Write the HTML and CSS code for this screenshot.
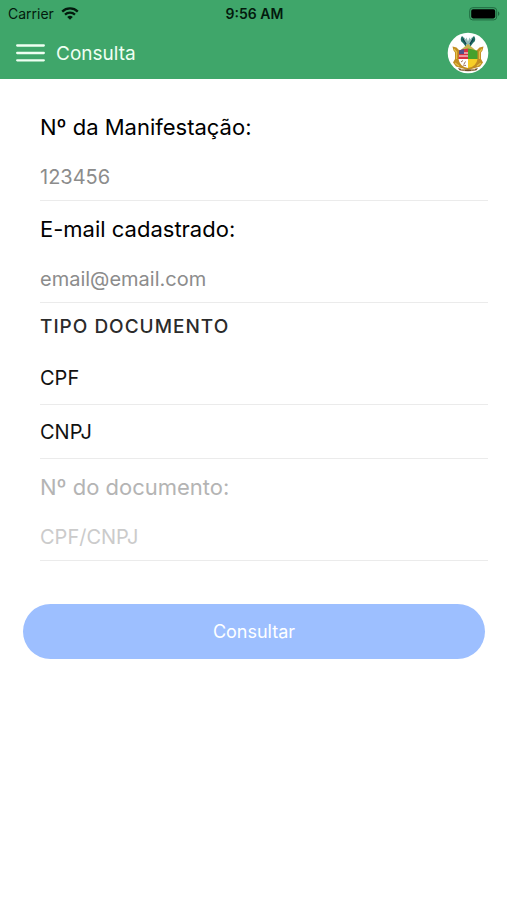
FILE: index.html
```html
<!DOCTYPE html>
<html lang="pt-BR">
<head>
  <meta charset="UTF-8">
  <title>Consulta</title>
  <meta name="viewport" content="width=device-width, initial-scale=1">
  <link rel="stylesheet" href="styles.css">
</head>
<body>

  <header class="header">
    <div class="status-bar">
      <div class="carrier">
        <span>Carrier</span>
        <svg class="wifi" viewBox="0 0 18 13" width="18" height="13" aria-hidden="true">
          <path d="M1.2 4.6a11.2 11.2 0 0 1 15.6 0" fill="none" stroke="#031a0d" stroke-width="2.3"/>
          <path d="M4 7.6a7.2 7.2 0 0 1 10 0" fill="none" stroke="#031a0d" stroke-width="2.2"/>
          <path d="M9 12.8L6.2 10a4 4 0 0 1 5.6 0z" fill="#031a0d"/>
        </svg>
      </div>
      <span class="time">9:56 AM</span>
      <svg class="battery" viewBox="0 0 32 14" width="32" height="14" aria-hidden="true">
        <rect x="0.7" y="0.7" width="27" height="12.2" rx="3" fill="none" stroke="#1f6a40" stroke-width="1"/>
        <rect x="2.2" y="2.2" width="24" height="9.2" rx="1.8" fill="#000"/>
        <path d="M29 4.6c1.8.6 1.8 3.8 0 4.4z" fill="#1f6a40"/>
      </svg>
    </div>

    <div class="toolbar">
      <button type="button" class="menu-btn" aria-label="Menu">
        <svg viewBox="0 0 29 20" width="29" height="20" aria-hidden="true">
          <path d="M1.2 2.5h26.6M1.2 10h26.6M1.2 17.3h26.6" stroke="#effff2" stroke-width="2.3" stroke-linecap="round"/>
        </svg>
      </button>
      <h1 class="title">Consulta</h1>
      <!-- coat of arms -->
      <svg class="crest" viewBox="0 0 42 42" width="42" height="42" role="img" aria-label="Brasão">
        <circle cx="21" cy="21" r="20.3" fill="#fff"/>
        <path d="M15 4c-2 2.500-1.500 5.500 1 7l3 4 1-4-2-4zM27 4c2 2.500 1.500 5.500-1 7L23 15l-1-4 2-4z" fill="#1e6d63"/>
        <path d="M16.500 4.500l2 3 1-2 1.500 4 1.500-4 1 2 2-3-1 6-3.500 4-3.500-4z" fill="#8fb9b4"/>
        <path d="M16 7l3 5M26 7l-3 5" stroke="#113f4b" stroke-width="1.400"/>
        <path d="M13 18.500L21 12l8 6.500z" fill="#c6b44c"/>
        <path d="M5.500 14.500l4 1 3 3h17l3-3 4-1-1 4-1.500 2v6.500l2 3.500-3 4-5 1.500-7 2-7-2-5-1.500-3-4 2-3.500V20.500l-1.500-2z" fill="#c28d22"/>
        <path d="M7 17l2.500 3v7M35 17l-2.500 3v7M8 31l4 3M34 31l-4 3" fill="none" stroke="#e2c249" stroke-width="1.200"/>
        <path d="M12 18.500q4-1.500 9-2V27H11.500z" fill="#d93142"/>
        <path d="M12 21h9M12 24h9" stroke="#fff" stroke-width="1"/>
        <path d="M12 18.500q2-1 5-1.500v5h-5z" fill="#54528b"/>
        <path d="M21 16.500q5 .5 9.500 2.500v8H21z" fill="#47a12c"/>
        <path d="M11.500 27H21v9q-8.500-1.500-9.500-9z" fill="#fff"/>
        <path d="M21 27h9.500q-1 7.500-9.500 9z" fill="#f6ce27"/>
        <path d="M14 30l2-1.500M17 32l1.500-2.500M16 33l3 .5" stroke="#9b725b" stroke-width="1"/>
        <path d="M11 36q10 3 20 0l-1.500 2.300q-8.500 2-17 0z" fill="#70512a"/>
        <path d="M14 37.500l4 .7M24 38.200l4-.7" stroke="#ddb98c" stroke-width="0.800"/>
      </svg>
    </div>
  </header>

  <main>
    <form class="form">
      <div class="list">
        <div class="field">
          <label for="numero">Nº da Manifestação:</label>
          <input type="text" id="numero" placeholder="123456">
        </div>
        <div class="field">
          <label for="email">E-mail cadastrado:</label>
          <input type="email" id="email" placeholder="email@email.com">
        </div>

        <fieldset class="doc-type">
          <legend>TIPO DOCUMENTO</legend>
          <label class="option"><input type="radio" name="tipo" value="cpf">CPF</label>
          <label class="option"><input type="radio" name="tipo" value="cnpj">CNPJ</label>
        </fieldset>

        <div class="field disabled">
          <label for="documento">Nº do documento:</label>
          <input type="text" id="documento" placeholder="CPF/CNPJ" disabled>
        </div>
      </div>

      <button type="submit" class="submit-btn" disabled>Consultar</button>
    </form>
  </main>

</body>
</html>
```

FILE: styles.css
```css
* {
  box-sizing: border-box;
}

body {
  margin: 0;
  background: #fff;
  color: #111;
  font-family: Inter, 'Helvetica Neue', sans-serif;
  font-size: 20px;
}

.header {
  background: #3fa66a;
}

.status-bar {
  display: grid;
  grid-template-columns: 1fr auto 1fr;
  align-items: center;
  height: 27px;
  padding: 0 6px 0 8px;
  color: #031a0d;
  font-size: 14px;
}

.carrier {
  display: flex;
  align-items: center;
  gap: 7px;
}

.time {
  font-weight: 600;
}

.battery {
  justify-self: end;
}

.toolbar {
  display: flex;
  align-items: center;
  height: 52px;
  padding: 0 18px 0 16px;
}

.menu-btn {
  display: flex;
  margin: 0 11px 0 0;
  padding: 0;
  border: none;
  background: none;
  cursor: pointer;
}

.title {
  flex: 1;
  margin: 0;
  color: #effff2;
  font-size: 19px;
  font-weight: 400;
}

.form {
  padding-top: 20px;
}

.list {
  margin: 0 19px 0 40px;
}

.field {
  padding-top: 13px;
  border-bottom: 1px solid #ebebeb;
}

.field label {
  display: block;
  margin-bottom: 12px;
  color: #000;
  font-size: 22px;
  line-height: 30px;
}

.field input {
  display: block;
  width: 100%;
  height: 46px;
  padding: 0;
  border: none;
  outline: none;
  background: none;
  color: #111;
  font: inherit;
}

.field input::placeholder {
  color: #8c8c8c;
  opacity: 1;
}

.field.disabled label {
  color: #b4b4b4;
}

.field.disabled input::placeholder {
  color: #cbcbcb;
}

.doc-type {
  margin: 0;
  padding: 0;
  border: none;
}

.doc-type legend {
  padding: 0;
  color: #2b2b2b;
  font-size: 19px;
  font-weight: 500;
  letter-spacing: 1px;
  line-height: 48px;
}

.option {
  display: flex;
  align-items: center;
  height: 54px;
  border-bottom: 1px solid #ebebeb;
  cursor: pointer;
}

/* the whole row is the control, no dot is shown */
.option input {
  appearance: none;
  width: 0;
  margin: 0;
}

.submit-btn {
  display: block;
  width: calc(100% - 45px);
  height: 55px;
  margin: 43px 22px 0 23px;
  padding: 0;
  border: none;
  border-radius: 28px;
  background: #9dbfff;
  color: #fff;
  font: inherit;
  font-size: 18px;
}
```
